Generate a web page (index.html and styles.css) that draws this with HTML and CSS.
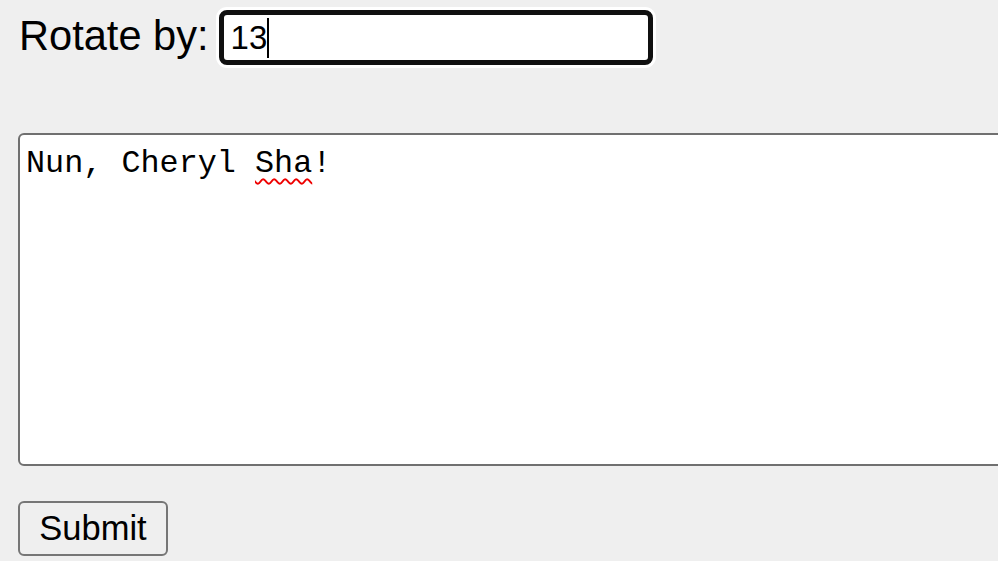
FILE: index.html
```html
<!DOCTYPE html>
<html>
<head>
<meta charset="utf-8">
<link rel="stylesheet" href="styles.css">
</head>
<body>
<form class="form">
  <div class="row">
    <label class="label">Rotate by:</label>
    <div class="rot"><span class="val">13</span><span class="caret"></span></div>
  </div>
  <div class="text">Nun, Cheryl <span class="spell">Sha</span>!</div>
  <div class="actions"><button type="button" class="submit">Submit</button></div>
</form>
</body>
</html>
```
FILE: styles.css
```css
html, body {
  margin: 0;
  padding: 0;
  background: #efefef;
  overflow: hidden;
}
.form {
  padding: 10px 0 0 18px;
  display: flex;
  flex-direction: column;
}
.row {
  display: flex;
  align-items: center;
  gap: 10px;
  height: 55px;
}
.label {
  font-family: "Liberation Sans", Arial, sans-serif;
  font-size: 41.6px;
  color: #000;
  padding-left: 1px;
  line-height: 1;
  margin-top: -4px;
}
.rot {
  box-sizing: border-box;
  width: 434px;
  height: 55px;
  border: 5px solid #101010;
  border-radius: 8px;
  background: #fff;
  box-shadow: 0 0 0 3px #fff;
  display: flex;
  align-items: center;
  padding-left: 7px;
  font-family: "Liberation Sans", Arial, sans-serif;
  font-size: 33px;
  color: #000;
}
.val { line-height: 1; }
.caret {
  display: inline-block;
  width: 2px;
  height: 40px;
  background: #000;
}
.text {
  box-sizing: border-box;
  margin-top: 68px;
  width: 1010px;
  height: 333px;
  border: 2.5px solid #707070;
  border-radius: 6px;
  background: #fff;
  padding: 10px 6px 8px;
  font-family: "Liberation Mono", "DejaVu Sans Mono", monospace;
  font-size: 31.8px;
  line-height: 1.2;
  color: #000;
}
.spell {
  text-decoration: underline wavy #e00;
  text-decoration-thickness: 2px;
  text-underline-offset: 6px;
}
.actions {
  margin-top: 35px;
  display: flex;
}
.submit {
  box-sizing: border-box;
  width: 150px;
  height: 55px;
  border: 2.5px solid #767676;
  border-radius: 6px;
  background: #efefef;
  font-family: "Liberation Sans", Arial, sans-serif;
  font-size: 34.5px;
  color: #000;
  padding: 0;
}
```
